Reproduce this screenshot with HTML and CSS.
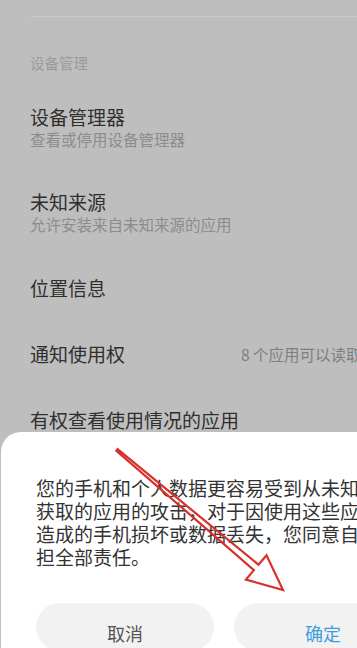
FILE: index.html
```html
<!DOCTYPE html>
<html lang="zh-CN">
<head>
<meta charset="utf-8">
<title>设备管理</title>
<link rel="stylesheet" href="styles.css">
</head>
<body>
<div class="screen">
  <div class="list">
    <div class="divider"></div>
    <div class="section-header">设备管理</div>
    <div class="item item-two">
      <div class="title">设备管理器</div>
      <div class="sub">查看或停用设备管理器</div>
    </div>
    <div class="item item-two">
      <div class="title">未知来源</div>
      <div class="sub">允许安装来自未知来源的应用</div>
    </div>
    <div class="item">
      <div class="title">位置信息</div>
    </div>
    <div class="item item-row">
      <div class="title">通知使用权</div>
      <div class="value">8 个应用可以读取通知</div>
    </div>
    <div class="item">
      <div class="title">有权查看使用情况的应用</div>
    </div>
  </div>

  <div class="dialog">
    <div class="message">
      <span class="line">您的手机和个人数据更容易受到从未知来源</span>
      <span class="line">获取的应用的攻击，对于因使用这些应用而</span>
      <span class="line">造成的手机损坏或数据丢失，您同意自行承</span>
      <span class="line">担全部责任。</span>
    </div>
    <div class="buttons">
      <div class="btn btn-cancel">取消</div>
      <div class="btn btn-ok">确定</div>
    </div>
  </div>

  <svg class="arrow" width="357" height="648" viewBox="0 0 357 648">
    <polygon points="117.6,449.2 258.5,564.7 266.5,555.2 283,590 245.9,579.6 253.9,570.1 116.4,450.8"
      fill="none" stroke="#d8302c" stroke-width="2.2" stroke-linejoin="miter"/>
  </svg>
</div>
</body>
</html>
```

FILE: styles.css
```css
html, body {
  margin: 0;
  padding: 0;
  width: 357px;
  height: 648px;
  overflow: hidden;
  background: #bebebe;
}

.screen {
  position: relative;
  width: 357px;
  height: 648px;
  overflow: hidden;
  background: #bebebe;
  font-family: "Noto Sans CJK SC", "Noto Sans", sans-serif;
}

.list {
  width: 446px;
}

.divider {
  margin-top: 16px;
  margin-left: 30px;
  height: 1px;
  background: #cacaca;
}

.section-header {
  padding: 36px 30px 12px;
  font-size: 14.5px;
  line-height: 20px;
  color: #9a9a9c;
}

.item {
  padding: 21px 30px;
}

.item-two {
  padding-top: 20px;
}

.item-row {
  display: grid;
  grid-template-columns: 211px auto;
  align-items: center;
}

.title {
  font-size: 19px;
  line-height: 24px;
  color: #2f2f2f;
  white-space: nowrap;
}

.sub {
  font-size: 15.5px;
  line-height: 20px;
  color: #8c8c8c;
  white-space: nowrap;
}

.value {
  font-size: 15.5px;
  line-height: 24px;
  color: #7e7e7e;
  white-space: nowrap;
}

.dialog {
  position: absolute;
  top: 432px;
  left: 1px;
  width: 446px;
  height: 240px;
  box-sizing: border-box;
  padding: 44px 35px 0;
  background: #ffffff;
  border-radius: 20px 20px 0 0;
}

.message {
  font-size: 19px;
  line-height: 23px;
  color: #333333;
}

.line {
  display: block;
  white-space: nowrap;
}

.buttons {
  margin-top: 35px;
  display: grid;
  grid-template-columns: 178px 178px;
  column-gap: 20px;
}

.btn {
  height: 48px;
  border-radius: 24px;
  background: #f2f2f2;
  display: flex;
  justify-content: center;
  align-items: flex-start;
  box-sizing: border-box;
  padding-top: 17px;
  font-size: 18px;
}

.btn-cancel {
  color: #555555;
}

.btn-ok {
  color: #3f9ddf;
}

.arrow {
  position: absolute;
  top: 0;
  left: 0;
  pointer-events: none;
}
```
